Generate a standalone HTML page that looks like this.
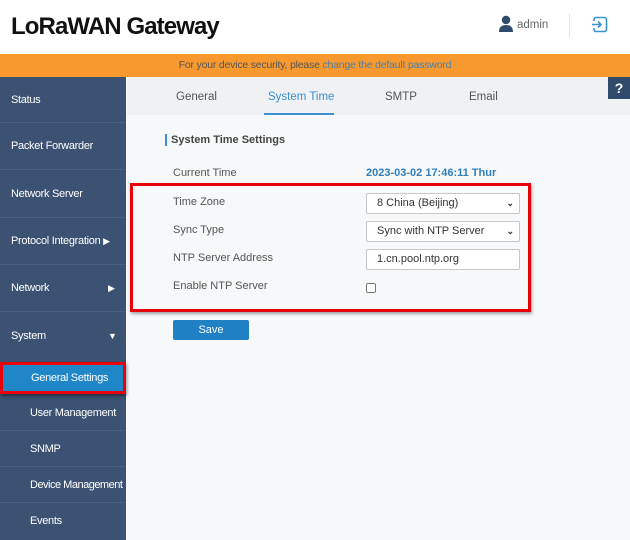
<!DOCTYPE html>
<html><head><meta charset="utf-8"><style>
*{margin:0;padding:0;box-sizing:border-box}
body{width:630px;height:540px;overflow:hidden;font-family:"Liberation Sans",sans-serif;background:#f6f8f9;position:relative}
.abs{position:absolute;white-space:nowrap}
.hdr{left:0;top:0;width:630px;height:54px;background:#fff;box-shadow:0 2px 3px rgba(0,0,0,.35)}
.title{left:11px;top:13px;font-size:24px;font-weight:bold;color:#111;letter-spacing:-0.9px}
.orange{left:0;top:54px;width:630px;height:23px;background:#f7992f;font-size:10.5px;color:#555;text-align:center;line-height:23px;letter-spacing:-0.2px}
.orange span{color:#4a7ea8}
.side{left:0;top:77px;width:126px;height:463px;background:#3b5272}
.si{position:absolute;left:0;width:126px;color:#fff;font-size:11px;border-bottom:1px solid #46607f;white-space:nowrap;letter-spacing:-0.3px}
.tabs{left:127px;top:77px;width:503px;height:38px;background:#eff1f2}
.tab{position:absolute;top:14px;font-size:11.5px;color:#555}
.lbl{position:absolute;left:173px;font-size:11px;color:#555}
.inp{position:absolute;left:366px;width:154px;height:21px;border:1px solid #c8c8c8;background:#fff;border-radius:2px;font-size:11px;color:#333;padding-left:10px;line-height:19px}
.inp i{position:absolute;right:5px;top:0;font-style:normal;font-size:9px;font-weight:bold}
</style></head><body>
<div class="abs hdr"></div>
<div class="abs title">LoRaWAN Gateway</div>
<svg class="abs" style="left:499px;top:15px" width="14" height="18" viewBox="0 0 14 18"><circle cx="7" cy="5" r="4.2" fill="#2f4a6a"/><path d="M0 17 Q0 10 7 10 Q14 10 14 17Z" fill="#2f4a6a"/></svg>
<div class="abs" style="left:517px;top:19px;font-size:11.5px;color:#666">admin</div>
<div class="abs" style="left:569px;top:14px;width:1px;height:24px;background:#e3e3e3"></div>
<svg class="abs" style="left:591px;top:16px" width="17" height="17" viewBox="0 0 17 17"><path d="M3 5V3.5Q3 1.5 5 1.5H13Q15.5 1.5 15.5 4V13Q15.5 15.5 13 15.5H5Q3 15.5 3 13.5V12" fill="none" stroke="#3d92d0" stroke-width="1.6"/><path d="M1 8.5H10M7 5.5L10 8.5L7 11.5" fill="none" stroke="#3d92d0" stroke-width="1.6"/></svg>
<div class="abs orange">For your device security, please <span>change the default password</span></div>
<div class="abs side"></div>
<div class="si" style="top:77px;height:46px;line-height:46px;padding-left:11px">Status</div>
<div class="si" style="top:123px;height:47px;line-height:47px;padding-left:11px">Packet Forwarder</div>
<div class="si" style="top:170px;height:48px;line-height:48px;padding-left:11px">Network Server</div>
<div class="si" style="top:218px;height:47px;line-height:47px;padding-left:11px">Protocol Integration <span style="font-size:9px">&#9654;</span></div>
<div class="si" style="top:265px;height:47px;line-height:47px;padding-left:11px">Network<span style="position:absolute;left:108px;font-size:9px">&#9654;</span></div>
<div class="si" style="top:312px;height:50px;line-height:48px;padding-left:11px;border-bottom:none">System<span style="position:absolute;left:108px;font-size:9px">&#9660;</span></div>
<div class="abs" style="left:0;top:362px;width:126px;height:32px;border:3px solid #e8000b;background:#1f86c7;box-shadow:1px 2px 3px rgba(0,0,0,.4);color:#fff;font-size:11px;line-height:26px;padding-left:28px;letter-spacing:-0.3px">General Settings</div>
<div class="si" style="top:394px;height:37px;line-height:38px;padding-left:30px">User Management</div>
<div class="si" style="top:431px;height:36px;line-height:36px;padding-left:30px">SNMP</div>
<div class="si" style="top:467px;height:36px;line-height:36px;padding-left:30px;letter-spacing:-0.5px">Device Management</div>
<div class="si" style="top:503px;height:37px;line-height:37px;padding-left:30px;border:none">Events</div>
<div class="abs tabs"></div>
<div class="tab" style="left:176px;top:91px">General</div>
<div class="tab" style="left:268px;top:91px;color:#3a8fcf">System Time</div>
<div class="abs" style="left:264px;top:113px;width:70px;height:2px;background:#3a8fcf"></div>
<div class="tab" style="left:385px;top:91px">SMTP</div>
<div class="tab" style="left:469px;top:91px">Email</div>
<div class="abs" style="left:608px;top:77px;width:22px;height:22px;background:#2f4a6a;color:#fff;font-weight:bold;font-size:14px;text-align:center;line-height:22px">?</div>
<div class="abs" style="left:165px;top:134px;width:2px;height:12px;background:#3a8fcf"></div>
<div class="abs" style="left:171px;top:134px;font-size:11px;font-weight:bold;color:#444">System Time Settings</div>
<div class="lbl" style="top:167px">Current Time</div>
<div class="abs" style="left:366px;top:167px;font-size:11px;font-weight:bold;color:#2f7fbf">2023-03-02 17:46:11 Thur</div>
<div class="abs" style="left:130px;top:183px;width:401px;height:129px;border:3px solid #e8000b;box-shadow:1px 2px 3px rgba(0,0,0,.35)"></div>
<div class="lbl" style="top:196px">Time Zone</div>
<div class="inp" style="top:193px">8 China (Beijing)<i>&#8964;</i></div>
<div class="lbl" style="top:224px">Sync Type</div>
<div class="inp" style="top:221px">Sync with NTP Server<i>&#8964;</i></div>
<div class="lbl" style="top:252px">NTP Server Address</div>
<div class="inp" style="top:249px">1.cn.pool.ntp.org</div>
<div class="lbl" style="top:280px">Enable NTP Server</div>
<div class="abs" style="left:366px;top:283px;width:10px;height:10px;border:1px solid #777;border-radius:2px;background:#fff"></div>
<div class="abs" style="left:173px;top:320px;width:76px;height:20px;background:#1f80c4;border-radius:2px;color:#fff;font-size:11px;text-align:center;line-height:20px">Save</div>
</body></html>
